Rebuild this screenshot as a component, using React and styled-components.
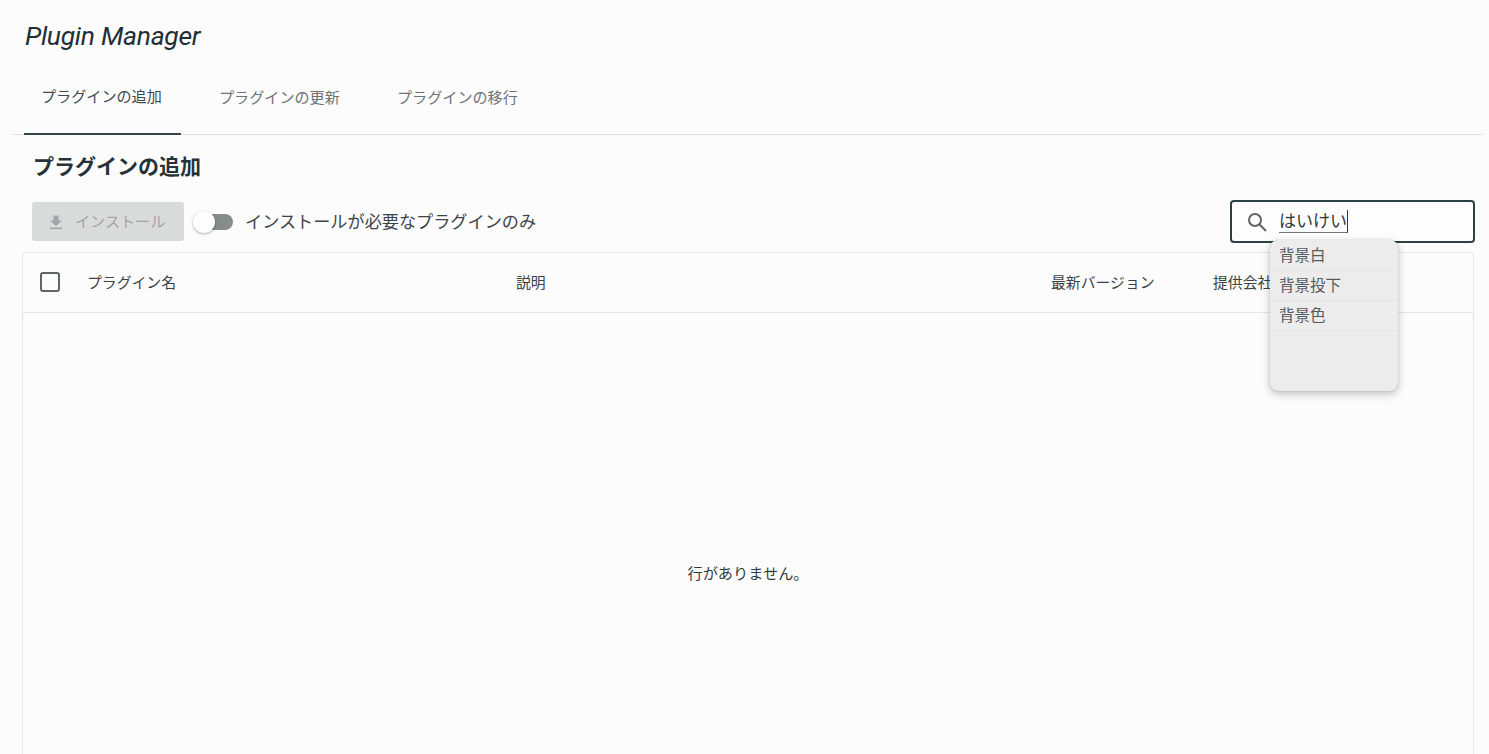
import React from "react";
import styled, { createGlobalStyle } from "styled-components";

const Global = createGlobalStyle`
  html, body { margin: 0; padding: 0; height: 754px; overflow: hidden; background: #fcfcfc; }
  body { font-family: Roboto, "Noto Sans CJK JP", sans-serif; color: #2b3437; }
  * { box-sizing: border-box; }
`;

const Page = styled.div`
  height: 754px;
  overflow: hidden;
  display: flex;
  flex-direction: column;
  padding: 0 6px 0 12px;
`;

const Title = styled.h1`
  margin: 0;
  padding: 21px 0 0 13px;
  height: 64px;
  font-size: 26.5px;
  line-height: 30px;
  font-weight: 400;
  font-style: italic;
  letter-spacing: -0.3px;
  color: #1f3035;
`;

const TabBar = styled.div`
  display: flex;
  height: 71px;
  padding-left: 12px;
  gap: 21px;
  border-bottom: 1px solid #e3e5e5;
`;

const Tab = styled.div`
  width: 157px;
  height: 71px;
  padding: 0 17px 7px;
  display: flex;
  align-items: center;
  font-size: 15.1px;
  white-space: nowrap;
  color: ${(p) => (p.$active ? "#3f4a4d" : "#6d7476")};
  border-bottom: ${(p) => (p.$active ? "2px solid #37474b" : "none")};
`;

const Heading = styled.h2`
  margin: 0;
  padding: 17px 0 0 21px;
  height: 63px;
  font-size: 21px;
  line-height: 30px;
  font-weight: 700;
  color: #263238;
`;

const Toolbar = styled.div`
  display: flex;
  align-items: center;
  flex: none;
  height: 47px;
  margin-bottom: 7px;
  padding: 0 8px 0 20px;
`;

const InstallButton = styled.div`
  width: 152px;
  height: 39px;
  background: #d9dada;
  border-radius: 3px;
  display: flex;
  align-items: center;
  padding: 0 0 0 16px;
  gap: 11px;
  color: #a2a5a6;
  font-size: 15.1px;
`;

const InstallText = styled.span`
  padding-bottom: 4px;
`;

const Switch = styled.div`
  width: 40px;
  height: 24px;
  margin-left: 9px;
  display: flex;
  align-items: center;
  position: relative;
`;

const SwitchTrack = styled.div`
  width: 34px;
  height: 16px;
  margin-left: 6px;
  border-radius: 8px;
  background: #858c8a;
`;

const SwitchThumb = styled.div`
  position: absolute;
  left: 0;
  top: 1px;
  width: 22px;
  height: 22px;
  border-radius: 50%;
  background: #fdfdfd;
  box-shadow: 0 1px 3px rgba(0, 0, 0, 0.3);
`;

const SwitchLabel = styled.span`
  margin-left: 12px;
  padding-bottom: 2px;
  font-size: 17.15px;
  color: #3b4548;
`;

const Search = styled.div`
  margin-left: auto;
  width: 245px;
  height: 43px;
  border: 2px solid #2c4046;
  border-radius: 4px;
  display: flex;
  align-items: center;
  padding-left: 14px;
  gap: 11px;
  background: #fdfdfd;
`;

const Composing = styled.span`
  font-size: 17px;
  line-height: 22px;
  color: #33393b;
  border-bottom: 1.5px solid #6b7476;
  border-right: 1.5px solid #33393b;
`;

const Table = styled.div`
  flex: 1;
  margin: 0 9px 0 10px;
  border: 1px solid #e6e8e8;
  border-bottom: none;
  border-radius: 4px 4px 0 0;
  display: flex;
  flex-direction: column;
`;

const HeaderRow = styled.div`
  height: 60px;
  flex: none;
  display: grid;
  grid-template-columns: 64px 429px 535px 162px 1fr;
  align-items: center;
  padding-bottom: 2px;
  border-bottom: 1px solid #e6e8e8;
  font-size: 14.85px;
  color: #3a4245;
`;

const CheckCell = styled.div`
  display: flex;
  padding-left: 17px;
`;

const CheckBox = styled.div`
  width: 20px;
  height: 20px;
  border: 2px solid #5f6668;
  border-radius: 3px;
`;

const Empty = styled.div`
  flex: 1;
  display: flex;
  justify-content: center;
  padding-top: 248px;
  font-size: 15.2px;
  color: #333a3c;
`;

const Candidates = styled.div`
  position: absolute;
  left: 1270px;
  top: 240px;
  width: 128px;
  height: 151px;
  background: #ececec;
  border-radius: 8px;
  box-shadow: 0 3px 9px rgba(0, 0, 0, 0.25), 0 0 1px rgba(0, 0, 0, 0.3);
  padding-top: 1px;
`;

const Candidate = styled.div`
  height: 30px;
  padding: 1px 0 0 9px;
  font-size: 15.5px;
  line-height: 28px;
  color: #555b5d;
  border-bottom: 1px solid #e4e4e4;
`;

const DownloadIcon = () => (
  <svg width="16" height="16" viewBox="0 0 16 16" fill="#a2a5a6">
    <path d="M5.5 1.5h5v5H14L8 12 2 6.5h3.5z" />
    <rect x="2" y="13.5" width="12" height="1.6" />
  </svg>
);

const SearchIcon = () => (
  <svg width="22" height="22" viewBox="0 0 22 22" fill="none" stroke="#5f6466" strokeWidth="2">
    <circle cx="9" cy="9" r="6" />
    <path d="M13.5 13.5 20 20" />
  </svg>
);

export default function App() {
  return (
    <>
      <Global />
      <Page>
        <Title>Plugin Manager</Title>
        <TabBar>
          <Tab $active>プラグインの追加</Tab>
          <Tab>プラグインの更新</Tab>
          <Tab>プラグインの移行</Tab>
        </TabBar>
        <Heading>プラグインの追加</Heading>
        <Toolbar>
          <InstallButton>
            <DownloadIcon />
            <InstallText>インストール</InstallText>
          </InstallButton>
          <Switch>
            <SwitchTrack />
            <SwitchThumb />
          </Switch>
          <SwitchLabel>インストールが必要なプラグインのみ</SwitchLabel>
          <Search>
            <SearchIcon />
            <Composing>はいけい</Composing>
          </Search>
        </Toolbar>
        <Table>
          <HeaderRow>
            <CheckCell>
              <CheckBox />
            </CheckCell>
            <span>プラグイン名</span>
            <span>説明</span>
            <span>最新バージョン</span>
            <span>提供会社</span>
          </HeaderRow>
          <Empty>行がありません。</Empty>
        </Table>
      </Page>
      <Candidates>
        <Candidate>背景白</Candidate>
        <Candidate>背景投下</Candidate>
        <Candidate>背景色</Candidate>
      </Candidates>
    </>
  );
}
